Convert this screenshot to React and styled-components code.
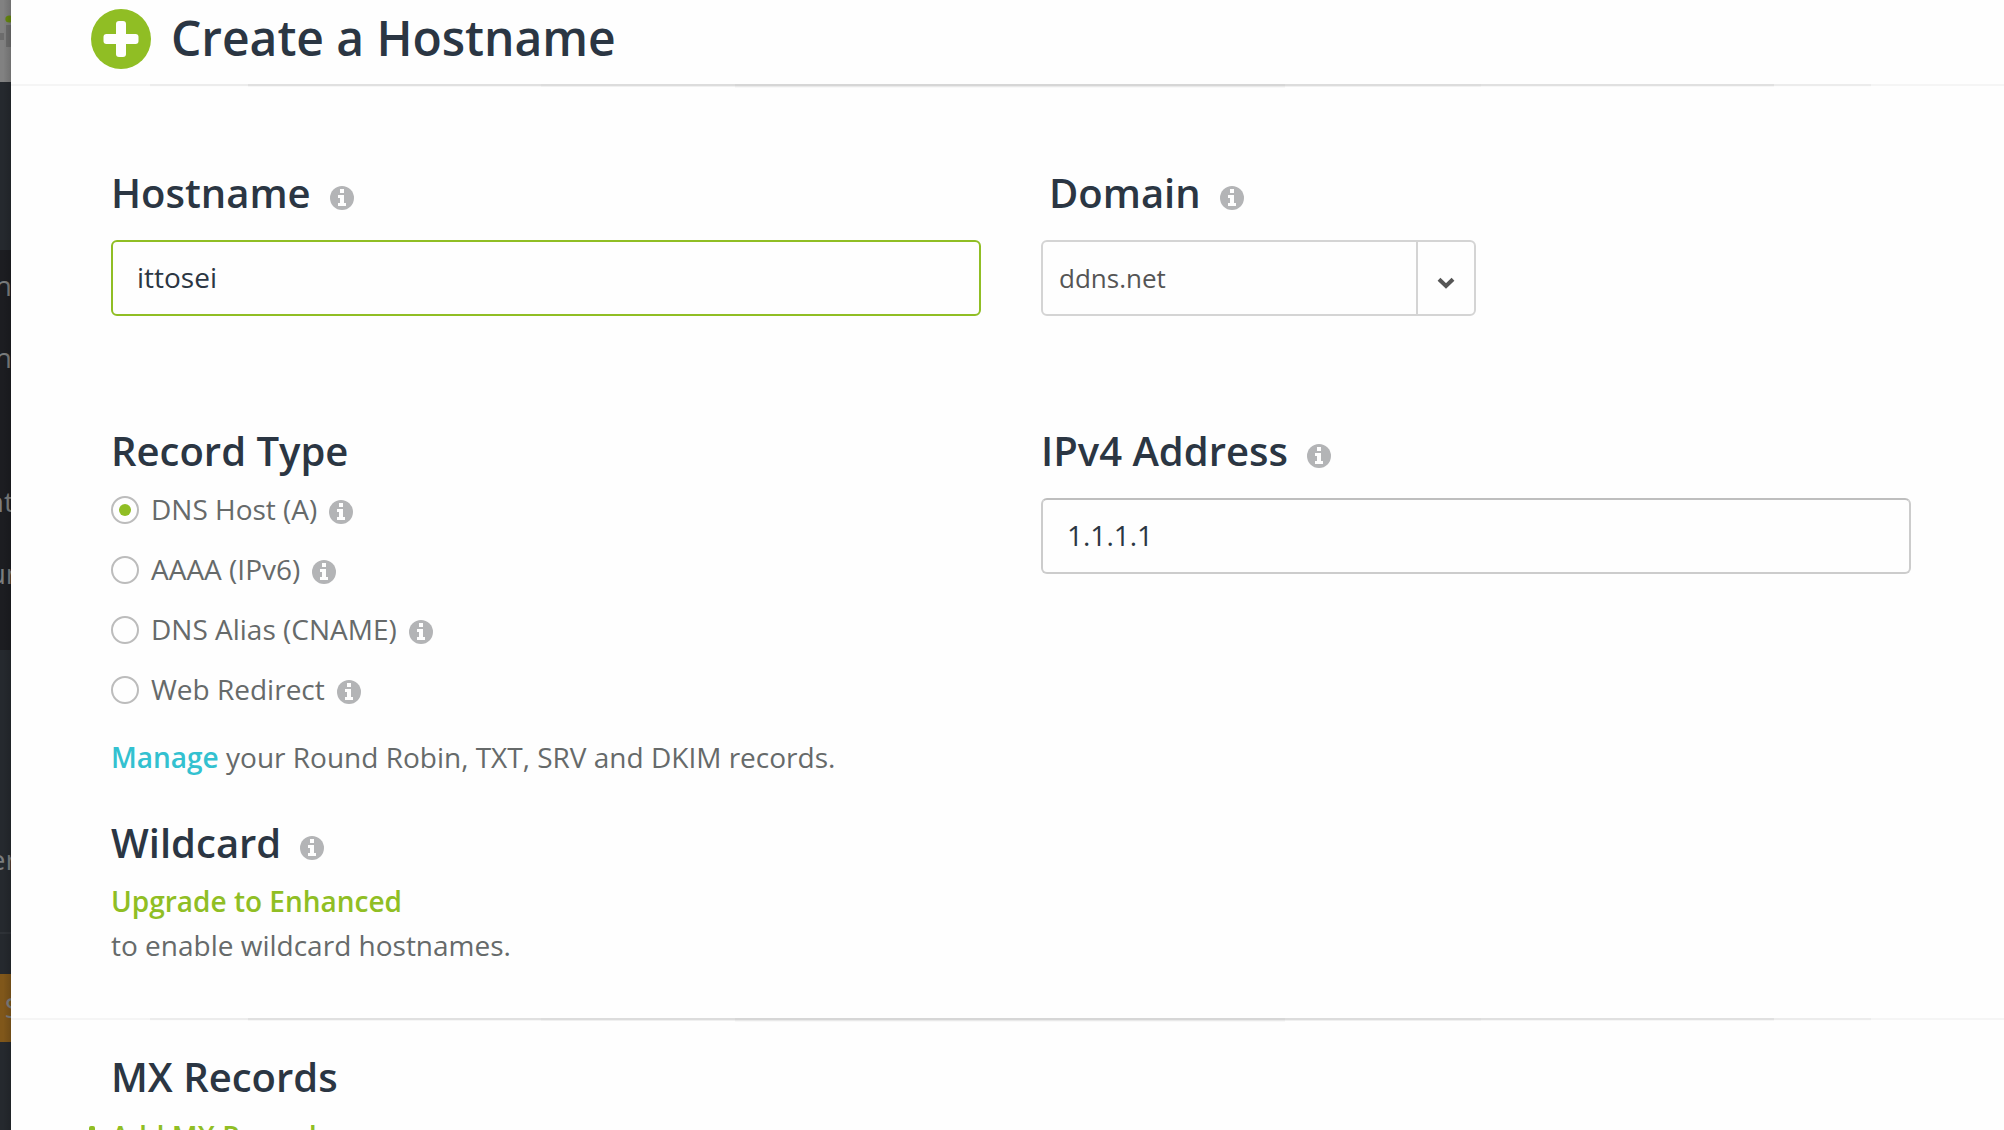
import React, { useState } from 'react';
import styled, { createGlobalStyle } from 'styled-components';

const Global = createGlobalStyle`
  * { box-sizing: border-box; }
  html, body { margin: 0; height: 100%; overflow: hidden; background: #fefefe; }
  body { font-family: 'Open Sans', 'Noto Sans', sans-serif; font-size: 28px; color: #666a6a; }
`;

const Page = styled.div`
  display: flex;
  width: 2004px;
  height: 1130px;
  overflow: hidden;
`;

const Sidebar = styled.aside`
  position: relative;
  display: flex;
  flex-direction: column;
  flex: 0 0 11px;
  height: 1130px;
  overflow: hidden;
  background: #25292e;
  &::after {
    content: '';
    position: absolute;
    inset: 0;
    background: linear-gradient(90deg, transparent 30%, rgba(0, 0, 0, 0.14));
  }
`;

const SideBlock = styled.div`
  position: relative;
  flex: 0 0 ${(p) => p.$h}px;
  background: ${(p) => p.$bg};
  overflow: hidden;
  ${(p) => p.$line && 'border-bottom: 2px solid #2e3237;'}
`;

const SideText = styled.span`
  position: absolute;
  right: ${(p) => p.$right}px;
  top: ${(p) => p.$top}px;
  font-size: 28px;
  line-height: 36px;
  white-space: nowrap;
  color: #7b7d7e;
`;

const Logo = styled.svg`
  display: block;
  width: 11px;
  height: 82px;
`;

const Modal = styled.main`
  flex: 1;
  display: flex;
  flex-direction: column;
  background: #fefefe;
`;

const Header = styled.header`
  display: flex;
  align-items: flex-start;
  flex: 0 0 84px;
  padding: 9px 0 0 80px;
  gap: 20px;
`;

const PlusIcon = styled.svg`
  display: block;
  width: 60px;
  height: 60px;
`;

const Title = styled.h1`
  margin: -1px 0 0;
  font-size: 48px;
  font-weight: 600;
  line-height: 60px;
  letter-spacing: -0.06px;
  color: #2b3643;
`;

const Rule = styled.div`
  flex: 0 0 5px;
  display: grid;
  grid-template-columns: 139px 98px 293px 194px 550px 196px 293px 97px 133px;
`;

const RulePart = styled.span`
  background: linear-gradient(${(p) => p.$stops});
`;

const Form = styled.section`
  display: grid;
  grid-template-columns: 870px 870px;
  grid-template-rows: 258px 1fr;
  column-gap: 60px;
  flex: 0 0 929px;
  padding: 80px 0 0 100px;
`;

const Field = styled.div`
  display: flex;
  flex-direction: column;
  align-items: flex-start;
`;

const Heading = styled.h2`
  display: flex;
  align-items: center;
  gap: 19px;
  height: 48px;
  margin: 0 0 ${(p) => p.$mb || 0}px ${(p) => p.$ml || 0}px;
  font-size: 40px;
  font-weight: 600;
  line-height: 48px;
  white-space: nowrap;
  color: #2b3643;
`;

const InfoSvg = styled.svg`
  display: block;
  flex: none;
  width: 24px;
  height: 24px;
  margin-top: ${(p) => p.$drop}px;
`;

const Input = styled.input`
  width: 870px;
  height: 76px;
  padding: 0 24px 2px;
  border: 2px solid ${(p) => (p.$active ? '#90be24' : '#cccccc')};
  border-top-color: ${(p) => (p.$active ? '#90be24' : '#bebebe')};
  border-radius: 6px;
  outline: none;
  background: #fefefe;
  font-family: inherit;
  font-size: 28px;
  color: #2b3643;
`;

const Select = styled.div`
  display: flex;
  width: 435px;
  height: 76px;
  border: 2px solid #d4d4d4;
  border-radius: 6px;
`;

const SelectValue = styled.span`
  flex: 1;
  padding-left: 16px;
  font-size: 26px;
  line-height: 72px;
  color: #555555;
`;

const SelectArrow = styled.span`
  display: flex;
  align-items: center;
  justify-content: center;
  width: 58px;
  padding-top: 9px;
  border-left: 2px solid #d4d4d4;
`;

const RadioList = styled.div`
  display: flex;
  flex-direction: column;
  margin-bottom: 15px;
`;

const RadioRow = styled.label`
  display: flex;
  align-items: center;
  height: 60px;
  line-height: 40px;
  white-space: nowrap;
`;

const Radio = styled.span`
  display: flex;
  align-items: center;
  justify-content: center;
  width: 28px;
  height: 28px;
  margin-right: 12px;
  border: 2px solid #bcbcbc;
  border-radius: 50%;
  &::after {
    content: '';
    width: 12px;
    height: 12px;
    border-radius: 50%;
    background: ${(p) => (p.$on ? '#90be24' : 'transparent')};
  }
`;

const RadioText = styled.span`
  margin-right: 12px;
  padding-bottom: 2px;
`;

const Note = styled.p`
  margin: 0 0 ${(p) => p.$mb || 0}px;
  line-height: 44px;
  white-space: nowrap;
`;

const Link = styled.a`
  font-weight: 600;
  color: ${(p) => p.$color};
`;

const Records = styled.section`
  flex: 1;
  padding: 30px 0 0 100px;
`;

const AddRow = styled.div`
  display: flex;
  align-items: flex-start;
  margin-left: -29px;
  gap: 9px;
  line-height: 44px;
  font-weight: 600;
  color: #90be24;
`;

const AddIcon = styled.svg`
  display: block;
  width: 20px;
  height: 20px;
  margin-top: 12px;
`;

function Info({ drop = 10 }) {
  return (
    <InfoSvg viewBox="0 0 24 24" $drop={drop}>
      <circle cx="12" cy="12" r="12" fill="#b3b4b6" />
      <path d="M10 3h4v4h-4zM8 9h6v8h2v3H8v-3h2v-5H8z" fill="#fefefe" />
    </InfoSvg>
  );
}

const EDGE = '#f5f5f5 0 2px, #fefefe 2px';
const OUTER = '#ececec 0 2px, #fcfcfc 2px 3px, #fefefe 3px';
const MID = '#e0e0e0 0 2px, #f6f6f6 2px 3px, #fefefe 3px';
const INNER = '#dcdcdc 0 2px, #f0f0f0 2px 3px, #fefefe 3px';
const CENTER = '#d6d6d6 0 2px, #e9e9e9 2px 3px, #f8f8f8 3px 4px, #fefefe 4px';
const PARTS = [EDGE, OUTER, MID, INNER, CENTER, INNER, MID, OUTER, EDGE];

function Divider() {
  return (
    <Rule>
      {PARTS.map((stops, i) => (
        <RulePart key={i} $stops={stops} />
      ))}
    </Rule>
  );
}

const TYPES = ['DNS Host (A)', 'AAAA (IPv6)', 'DNS Alias (CNAME)', 'Web Redirect'];

export default function App() {
  const [type, setType] = useState(0);
  return (
    <Page>
      <Global />
      <Sidebar>
        <SideBlock $h={82} $bg="#818181">
          <Logo viewBox="0 0 11 82">
            <rect x="0" y="33" width="4" height="7" fill="#6c6c6c" />
            <ellipse cx="9.5" cy="19" rx="4.2" ry="3.5" fill="#66880f" />
            <rect x="6" y="25" width="5" height="22" fill="#6c6c6c" />
          </Logo>
        </SideBlock>
        <SideBlock $h={168} $bg="#25292e" />
        <SideBlock $h={400} $bg="#1c1d21">
          <SideText $right={-1} $top={17}>n</SideText>
          <SideText $right={-1} $top={89}>n</SideText>
          <SideText $right={-3} $top={233}>nt</SideText>
          <SideText $right={-12} $top={305}>un</SideText>
        </SideBlock>
        <SideBlock $h={284} $bg="#25292e" $line>
          <SideText $right={-6} $top={191}>er</SideText>
        </SideBlock>
        <SideBlock $h={40} $bg="#25292e" />
        <SideBlock $h={68} $bg="#80571a">
          <SideText $right={-9} $top={15}>S</SideText>
        </SideBlock>
      </Sidebar>
      <Modal>
        <Header>
          <PlusIcon viewBox="0 0 60 60">
            <circle cx="30" cy="30" r="30" fill="#90be24" />
            <rect x="25" y="12" width="10" height="36" rx="3" fill="#fefefe" />
            <rect x="12.5" y="25" width="35" height="10" rx="3" fill="#fefefe" />
          </PlusIcon>
          <Title>Create a Hostname</Title>
        </Header>
        <Divider />
        <Form>
          <Field>
            <Heading $mb={23}>Hostname<Info /></Heading>
            <Input $active defaultValue="ittosei" />
          </Field>
          <Field>
            <Heading $mb={23} $ml={8}>Domain<Info /></Heading>
            <Select>
              <SelectValue>ddns.net</SelectValue>
              <SelectArrow>
                <svg width="18" height="12" viewBox="0 0 18 12">
                  <path d="M2 2.2L9 9l7-6.8" fill="none" stroke="#555" strokeWidth="4" />
                </svg>
              </SelectArrow>
            </Select>
          </Field>
          <Field>
            <Heading $mb={5}>Record Type</Heading>
            <RadioList>
              {TYPES.map((t, i) => (
                <RadioRow key={t} onClick={() => setType(i)}>
                  <Radio $on={type === i} />
                  <RadioText>{t}</RadioText>
                  <Info drop={4} />
                </RadioRow>
              ))}
            </RadioList>
            <Note $mb={40}>
              <Link $color="#33c1d0">Manage</Link> your Round Robin, TXT, SRV and DKIM records.
            </Note>
            <Heading $mb={12}>Wildcard<Info /></Heading>
            <Note>
              <Link $color="#90be24">Upgrade to Enhanced</Link>
              <br />
              to enable wildcard hostnames.
            </Note>
          </Field>
          <Field>
            <Heading $mb={23}>IPv4 Address<Info /></Heading>
            <Input defaultValue="1.1.1.1" />
          </Field>
        </Form>
        <Divider />
        <Records>
          <Heading $mb={13}>MX Records</Heading>
          <AddRow>
            <AddIcon viewBox="0 0 20 20">
              <rect x="7" y="0" width="6" height="20" rx="2" fill="#90be24" />
              <rect x="0" y="7" width="20" height="6" rx="2" fill="#90be24" />
            </AddIcon>
            Add MX Records
          </AddRow>
        </Records>
      </Modal>
    </Page>
  );
}
